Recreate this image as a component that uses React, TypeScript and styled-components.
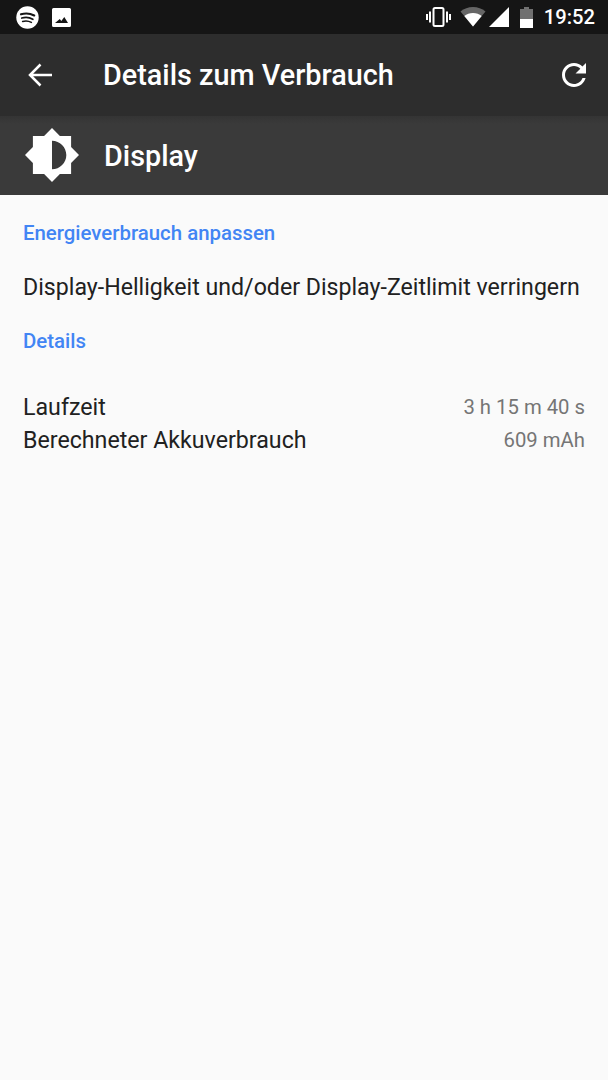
import React from 'react';
import styled, { createGlobalStyle } from 'styled-components';

const GlobalStyle = createGlobalStyle`
  html, body {
    margin: 0;
    padding: 0;
    background: #fafafa;
    font-family: Roboto, "Liberation Sans", sans-serif;
  }
`;

const Screen = styled.div`
  width: 608px;
  height: 1080px;
  display: flex;
  flex-direction: column;
  background: #fafafa;
  overflow: hidden;
`;

const StatusBar = styled.div`
  height: 34px;
  background: #151515;
  display: flex;
  align-items: center;
  justify-content: space-between;
  padding: 0 13px 0 16px;
`;

const StatusGroup = styled.div`
  display: flex;
  align-items: center;
`;

const Clock = styled.span`
  color: #fff;
  font-size: 20.2px;
  font-weight: 500;
  margin-left: 11px;
`;

const Toolbar = styled.div`
  height: 82px;
  background: #2d2d2d;
  display: flex;
  align-items: center;
  padding: 0 22px 0 28px;
`;

const ToolbarTitle = styled.h1`
  flex: 1;
  margin: 0 0 0 50px;
  color: #fff;
  font-size: 28.8px;
  font-weight: 500;
`;

const AppHeader = styled.div`
  height: 79px;
  background: linear-gradient(#343434, #3a3a3a 8px);
  display: flex;
  align-items: center;
  padding-left: 25px;
`;

const AppName = styled.span`
  color: #fff;
  font-size: 28.8px;
  font-weight: 500;
  margin-left: 25px;
`;

const Content = styled.div`
  padding: 0 23px;
  display: flex;
  flex-direction: column;
`;

const SectionTitle = styled.div<{ $top: number }>`
  margin-top: ${(p) => p.$top}px;
  height: 24px;
  line-height: 24px;
  color: #4285f4;
  font-size: 20.4px;
  font-weight: 500;
`;

const Hint = styled.div`
  margin-top: 27px;
  height: 32px;
  line-height: 32px;
  color: #212121;
  font-size: 23.15px;
  white-space: nowrap;
`;

const Rows = styled.div`
  margin-top: 39px;
  display: flex;
  flex-direction: column;
  gap: 3px;
`;

const Row = styled.div`
  display: flex;
  justify-content: space-between;
  align-items: center;
  height: 30px;
`;

const RowLabel = styled.span`
  color: #212121;
  font-size: 23.2px;
`;

const RowValue = styled.span`
  color: #757575;
  font-size: 20.3px;
`;

const BrightnessSvg = styled.svg`
  margin-bottom: 2px;
`;

const SpotifyIcon = () => (
  <svg width="23" height="23" viewBox="0 0 23 23">
    <circle cx="11.5" cy="11.5" r="11.2" fill="#fff" />
    <g fill="none" stroke="#151515" strokeLinecap="round">
      <path d="M5 8.3c4.4-1.3 9.2-.9 13.2 1.1" strokeWidth="2.2" />
      <path d="M5.8 12c3.8-1 7.8-.6 11 1.2" strokeWidth="1.8" />
      <path d="M6.6 15.4c3.1-.8 6.2-.5 8.8 1" strokeWidth="1.5" />
    </g>
  </svg>
);

const PictureIcon = () => (
  <svg width="19" height="19" viewBox="0 0 19 19" style={{ marginLeft: 13 }}>
    <path
      fillRule="evenodd"
      fill="#fff"
      d="M1.5 0h16A1.5 1.5 0 0 1 19 1.5v16a1.5 1.5 0 0 1-1.5 1.5h-16A1.5 1.5 0 0 1 0 17.500v-16A1.500 1.500 0 0 1 1.500 0zM3 15h13l-3.700-6-3 4-1.500-2z"
    />
  </svg>
);

const VibrateIcon = () => (
  <svg width="27" height="20" viewBox="0 0 27 20">
    <rect x="8.500" y="1" width="10" height="18" rx="1.500" fill="none" stroke="#fff" strokeWidth="2" />
    <path d="M5 4.500v11M2 7v6M22 4.500v11M25 7v6" fill="none" stroke="#fff" strokeWidth="2" />
  </svg>
);

const WifiIcon = () => (
  <svg width="26" height="20" viewBox="0 0 26 20" style={{ marginLeft: 8 }}>
    <path d="M13 19.500L.5 4.500C4 1.700 8.300 0 13 0s9 1.700 12.500 4.500z" fill="#666" />
    <path d="M13 19.500L4.300 9C6.700 7.100 9.700 6 13 6s6.300 1.100 8.700 3z" fill="#fff" />
  </svg>
);

const SignalIcon = () => (
  <svg width="20" height="20" viewBox="0 0 20 20" style={{ marginLeft: 3 }}>
    <path d="M0 20L20 0v20z" fill="#fff" />
  </svg>
);

const BatteryIcon = () => (
  <svg width="13" height="21" viewBox="0 0 13 21" style={{ marginLeft: 11 }}>
    <path d="M4 0h5v2h4v10H0V2h4z" fill="#707070" />
    <path d="M0 12h13v9H0z" fill="#fff" />
  </svg>
);

const BackIcon = () => (
  <svg width="25" height="24" viewBox="0 0 25 24">
    <path d="M24 12H2.500M12.500 1.500L2 12l10.500 10.500" fill="none" stroke="#fff" strokeWidth="2.500" />
  </svg>
);

const RefreshIcon = () => (
  <svg width="24" height="24" viewBox="4 4 16 16">
    <path
      fill="#fff"
      d="M17.650 6.350C16.200 4.900 14.210 4 12 4c-4.420 0-7.990 3.580-7.990 8s3.570 8 7.990 8c3.730 0 6.840-2.550 7.730-6h-2.080c-.82 2.330-3.040 4-5.650 4-3.310 0-6-2.690-6-6s2.690-6 6-6c1.660 0 3.140.69 4.220 1.780L13 11h7V4l-2.350 2.350z"
    />
  </svg>
);

const BrightnessIcon = () => (
  <BrightnessSvg width="54" height="54" viewBox="0.690 0.690 22.620 22.620">
    <path
      fillRule="evenodd"
      fill="#fff"
      d="M20 8.690V4h-4.690L12 .69 8.690 4H4v4.690L.69 12 4 15.310V20h4.690L12 23.310 15.310 20H20v-4.690L23.310 12 20 8.690zM12 18V6c3.310 0 6 2.690 6 6s-2.690 6-6 6z"
    />
  </BrightnessSvg>
);

const App: React.FC = () => (
  <>
    <GlobalStyle />
    <Screen>
      <StatusBar>
        <StatusGroup>
          <SpotifyIcon />
          <PictureIcon />
        </StatusGroup>
        <StatusGroup>
          <VibrateIcon />
          <WifiIcon />
          <SignalIcon />
          <BatteryIcon />
          <Clock>19:52</Clock>
        </StatusGroup>
      </StatusBar>
      <Toolbar>
        <BackIcon />
        <ToolbarTitle>Details zum Verbrauch</ToolbarTitle>
        <RefreshIcon />
      </Toolbar>
      <AppHeader>
        <BrightnessIcon />
        <AppName>Display</AppName>
      </AppHeader>
      <Content>
        <SectionTitle $top={26}>Energieverbrauch anpassen</SectionTitle>
        <Hint>Display-Helligkeit und/oder Display-Zeitlimit verringern</Hint>
        <SectionTitle $top={25}>Details</SectionTitle>
        <Rows>
          <Row>
            <RowLabel>Laufzeit</RowLabel>
            <RowValue>3 h 15 m 40 s</RowValue>
          </Row>
          <Row>
            <RowLabel>Berechneter Akkuverbrauch</RowLabel>
            <RowValue>609 mAh</RowValue>
          </Row>
        </Rows>
      </Content>
    </Screen>
  </>
);

export default App;
